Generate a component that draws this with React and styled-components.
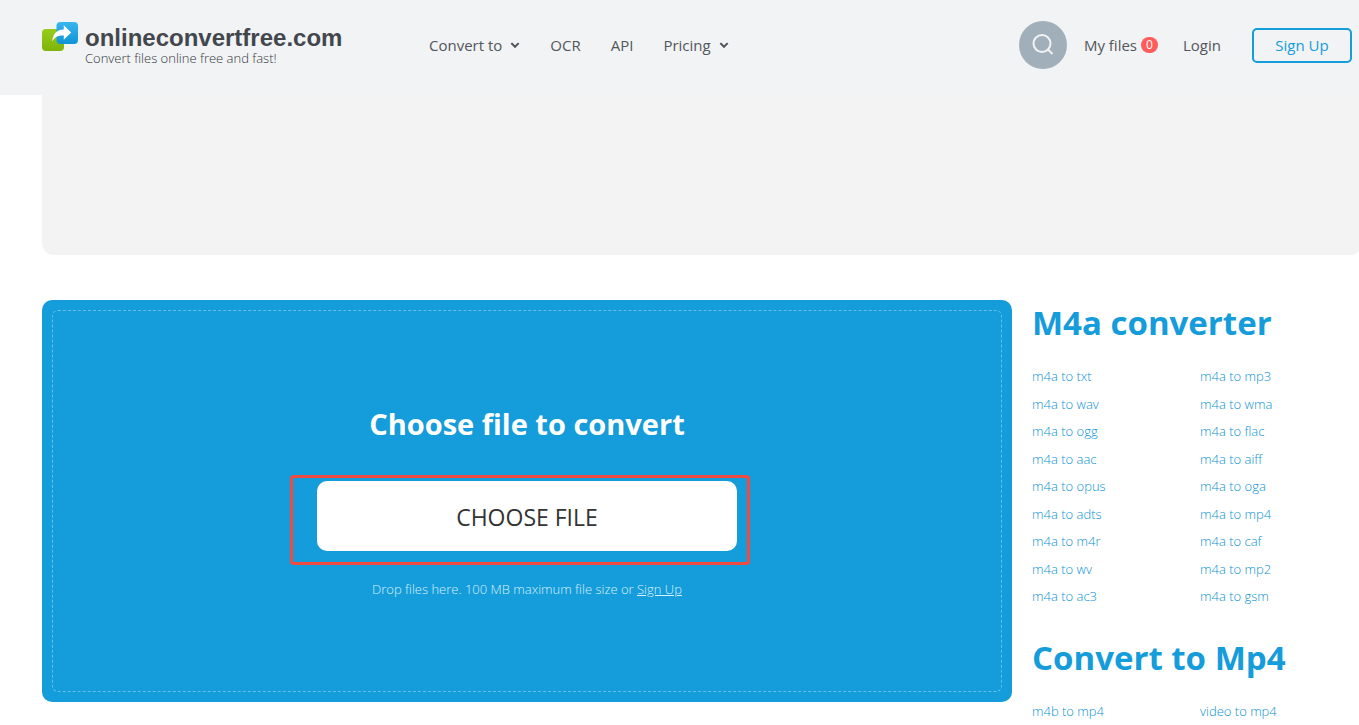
import React from "react";
import styled, { createGlobalStyle } from "styled-components";

const blue = "#159cda";

const GlobalStyle = createGlobalStyle`
  *, *::before, *::after { box-sizing: border-box; }
  html { overflow: hidden; }
  body {
    margin: 0;
    background: #fff;
    color: #53565a;
    font-family: "Open Sans", "Noto Sans", sans-serif;
    font-size: 15px;
  }
  h1, h2, p, ul { margin: 0; padding: 0; }
  a { color: inherit; text-decoration: none; }
  button { font-family: inherit; cursor: pointer; }
`;

const Header = styled.header`
  display: flex;
  align-items: flex-start;
  height: 95px;
  padding: 21px 7px 0 42px;
  background: #f1f3f5;
`;

const Brand = styled.a`
  display: flex;
  gap: 7px;
  width: 387px;
`;

const BrandText = styled.span`
  display: flex;
  flex-direction: column;
  padding-top: 3px;
`;

const BrandName = styled.span`
  font: bold 24px/28px "Liberation Sans", Arial, sans-serif;
  color: #43474d;
`;

const Tagline = styled.span`
  font-size: 13px;
  font-weight: 300;
  line-height: 12px;
  white-space: nowrap;
  color: #33373c;
`;

const Nav = styled.nav`
  display: flex;
  gap: 30px;
  height: 48px;
  align-items: center;
`;

const NavLink = styled.a`
  display: flex;
  align-items: center;
  gap: 8px;
  line-height: 24px;
  white-space: nowrap;
`;

const Account = styled.div`
  display: flex;
  align-items: center;
  height: 48px;
  margin-left: auto;
`;

const SearchButton = styled.button`
  display: grid;
  place-items: center;
  width: 48px;
  height: 48px;
  padding: 0;
  margin-right: 17px;
  border: 0;
  border-radius: 50%;
  background: #a1afba;
`;

const FilesLink = styled(NavLink)`
  gap: 4px;
  margin-right: 25px;
`;

const Count = styled.span`
  width: 17px;
  height: 16px;
  border-radius: 8px;
  background: #ff5c5c;
  color: #fff;
  font-size: 12px;
  line-height: 16px;
  text-align: center;
`;

const LoginLink = styled(NavLink)`
  margin-right: 31px;
`;

const SignUpButton = styled.button`
  width: 100px;
  height: 35px;
  padding: 0;
  border: 2px solid ${blue};
  border-radius: 5px;
  background: transparent;
  color: ${blue};
  font-size: 15px;
`;

const Banner = styled.div`
  height: 160px;
  margin: 0 -3px 45px 42px;
  border-radius: 0 0 12px 12px;
  background: #f3f3f3;
`;

const Main = styled.main`
  display: grid;
  grid-template-columns: 1fr 307px;
  gap: 20px;
  align-items: start;
  padding: 0 20px 0 42px;
`;

const Uploader = styled.section`
  padding: 10px;
  border-radius: 10px;
  background: ${blue};
`;

const DropZone = styled.div`
  display: flex;
  flex-direction: column;
  align-items: center;
  min-height: 382px;
  padding: 93px 0 0;
  border: 1px dashed #66bfe8;
  border-radius: 6px;
`;

const DropTitle = styled.h2`
  color: #fff;
  font-size: 29px;
  line-height: 40px;
`;

const ChooseFrame = styled.div`
  position: relative;
  width: 420px;
  margin: 37px 0 26px;
`;

const ChooseButton = styled.button`
  display: block;
  width: 100%;
  height: 70px;
  padding: 2px 0 0;
  border: 0;
  border-radius: 10px;
  background: #fff;
  color: #333;
  font-size: 23px;
`;

const Highlight = styled.span`
  position: absolute;
  inset: -6px -13px -14px -27px;
  border: 3px solid #f04a41;
  border-radius: 4px;
  pointer-events: none;
`;

const Hint = styled.p`
  color: #d9f1fc;
  font-size: 13px;
  font-weight: 300;
  line-height: 24px;

  a { text-decoration: underline; }
`;

const Sidebar = styled.aside`
  display: grid;
  gap: 24px;
`;

const GroupTitle = styled.h2`
  margin-bottom: 17px;
  color: ${blue};
  font-size: 33px;
  line-height: 46px;
  white-space: nowrap;
`;

const Formats = styled.ul`
  display: grid;
  grid-template-columns: 168px 1fr;
  grid-template-rows: repeat(${(p) => p.$rows}, 1fr);
  height: ${(p) => Math.ceil(p.$rows * 27.5)}px;
  list-style: none;
`;

const Format = styled.li`
  color: #0c93d3;
  font-size: 13px;
  font-weight: 300;
  line-height: 27px;
`;

const Chevron = () => (
  <svg width="10" height="8" viewBox="0 0 10 8" fill="none" aria-hidden="true">
    <path d="M2 2.8 5 5.8 8 2.8" stroke="#53565a" strokeWidth="2" strokeLinecap="square" />
  </svg>
);

const Logo = () => (
  <svg width="36" height="30" viewBox="0 0 36 30" aria-hidden="true">
    <defs>
      <linearGradient id="leaf" x1="0" y1="0" x2="0" y2="1">
        <stop offset="0" stopColor="#98cc1b" />
        <stop offset="1" stopColor="#7fb30b" />
      </linearGradient>
      <linearGradient id="sky" x1="0" y1="0" x2="0" y2="1">
        <stop offset="0" stopColor="#38b6f0" />
        <stop offset="1" stopColor="#1094d6" />
      </linearGradient>
    </defs>
    <rect x="0" y="8" width="22" height="22" rx="4" fill="url(#leaf)" />
    <rect x="14.5" y="1" width="21.5" height="22" rx="4" fill="url(#sky)" />
    <path d="M10.2 20.5C11 12.5 15 8.8 21.8 8.6V4.2L29.2 11.6 21.8 18.8V14.6C16.2 14.4 12.8 16 10.2 20.5Z" fill="#fff" />
  </svg>
);

const SearchIcon = () => (
  <svg width="22" height="22" viewBox="0 0 22 22" fill="none" stroke="#f1f3f5" strokeWidth="2" aria-hidden="true">
    <circle cx="10" cy="9.5" r="8.5" />
    <path d="M15.5 15 20.5 20" />
  </svg>
);

const groups = [
  {
    title: "M4a converter",
    items: [
      "m4a to txt", "m4a to mp3",
      "m4a to wav", "m4a to wma",
      "m4a to ogg", "m4a to flac",
      "m4a to aac", "m4a to aiff",
      "m4a to opus", "m4a to oga",
      "m4a to adts", "m4a to mp4",
      "m4a to m4r", "m4a to caf",
      "m4a to wv", "m4a to mp2",
      "m4a to ac3", "m4a to gsm",
    ],
  },
  { title: "Convert to Mp4", items: ["m4b to mp4", "video to mp4"] },
];

export default function App() {
  return (
    <>
      <GlobalStyle />
      <Header>
        <Brand href="#">
          <Logo />
          <BrandText>
            <BrandName>onlineconvertfree.com</BrandName>
            <Tagline>Convert files online free and fast!</Tagline>
          </BrandText>
        </Brand>
        <Nav>
          <NavLink href="#">Convert to <Chevron /></NavLink>
          <NavLink href="#">OCR</NavLink>
          <NavLink href="#">API</NavLink>
          <NavLink href="#">Pricing <Chevron /></NavLink>
        </Nav>
        <Account>
          <SearchButton aria-label="Search"><SearchIcon /></SearchButton>
          <FilesLink href="#">My files <Count>0</Count></FilesLink>
          <LoginLink href="#">Login</LoginLink>
          <SignUpButton>Sign Up</SignUpButton>
        </Account>
      </Header>
      <Banner />
      <Main>
        <Uploader>
          <DropZone>
            <DropTitle>Choose file to convert</DropTitle>
            <ChooseFrame>
              <ChooseButton>CHOOSE FILE</ChooseButton>
              <Highlight />
            </ChooseFrame>
            <Hint>Drop files here. 100 MB maximum file size or <a href="#">Sign Up</a></Hint>
          </DropZone>
        </Uploader>
        <Sidebar>
          {groups.map((group) => (
            <section key={group.title}>
              <GroupTitle>{group.title}</GroupTitle>
              <Formats $rows={group.items.length / 2}>
                {group.items.map((item) => (
                  <Format key={item}><a href="#">{item}</a></Format>
                ))}
              </Formats>
            </section>
          ))}
        </Sidebar>
      </Main>
    </>
  );
}
